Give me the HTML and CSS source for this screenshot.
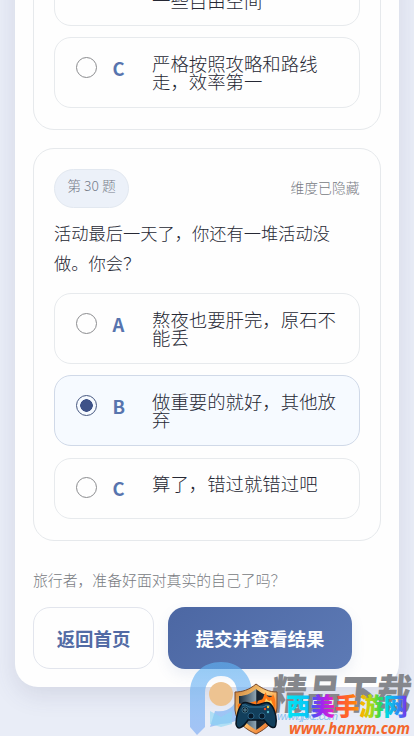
FILE: index.html
```html
<!DOCTYPE html>
<html lang="zh-CN">
<head>
<meta charset="utf-8">
<title>测试</title>
<link rel="stylesheet" href="styles.css">
</head>
<body>
<main class="panel">
  <section class="card">
    <div class="option first"><span class="radio"></span><b class="letter">B</b><span class="answer">大致规划，但留<br>一些自由空间</span></div>
    <div class="option"><span class="radio"></span><b class="letter">C</b><span class="answer">严格按照攻略和路线走，效率第一</span></div>
  </section>
  <section class="card">
    <header class="card-head"><span class="pill">第 30 题</span><span class="hint">维度已隐藏</span></header>
    <p class="question">活动最后一天了，你还有一堆活动没做。你会？</p>
    <div class="option"><span class="radio"></span><b class="letter">A</b><span class="answer">熬夜也要肝完，原石不能丢</span></div>
    <div class="option selected"><span class="radio"></span><b class="letter">B</b><span class="answer">做重要的就好，其他放弃</span></div>
    <div class="option"><span class="radio"></span><b class="letter">C</b><span class="answer">算了，错过就错过吧</span></div>
  </section>
  <p class="note">旅行者，准备好面对真实的自己了吗？</p>
  <div class="actions"><button class="btn">返回首页</button><button class="btn primary">提交并查看结果</button></div>
</main>
<svg class="watermark" width="234" height="86" viewBox="180 650 234 86">
  <defs>
    <linearGradient id="ring" x1="0" y1="0" x2="0" y2="1"><stop offset="0" stop-color="#5fb4f4"/><stop offset="1" stop-color="#79a9f4"/></linearGradient>
    <linearGradient id="rainbow" gradientUnits="userSpaceOnUse" x1="286" y1="0" x2="408" y2="0">
      <stop offset="0" stop-color="#00e8f2"/><stop offset=".17" stop-color="#08c8f5"/><stop offset=".22" stop-color="#4a55f0"/><stop offset=".29" stop-color="#9a28f0"/><stop offset=".38" stop-color="#e020d0"/><stop offset=".42" stop-color="#ff4a48"/><stop offset=".55" stop-color="#ff7a10"/><stop offset=".63" stop-color="#f5b800"/><stop offset=".69" stop-color="#b8d810"/><stop offset=".77" stop-color="#38d850"/><stop offset=".82" stop-color="#00dce0"/><stop offset=".91" stop-color="#1f96f5"/><stop offset="1" stop-color="#8a20e8"/>
    </linearGradient>
    <linearGradient id="gold" x1="0" y1="0" x2="1" y2="1"><stop offset="0" stop-color="#c97a35"/><stop offset=".45" stop-color="#ffd17b"/><stop offset="1" stop-color="#e9550c"/></linearGradient>
    <linearGradient id="steel" x1="0" y1="0" x2="1" y2="0"><stop offset="0" stop-color="#172b3c"/><stop offset=".5" stop-color="#8fa5b3"/><stop offset=".52" stop-color="#14212d"/><stop offset="1" stop-color="#29343c"/></linearGradient>
  </defs>
  <path d="M190 727V693C190 674 203 662 221 662C239 662 252 675 252 693C252 712 239 724 221 724L210 727L215 711C229 713 237 705 237 693C237 682 231 676 221 676C211 676 205 683 205 693V727L197 735Z" fill="url(#ring)" opacity=".62"/>
  <path d="M210 711L221 717L232 711V724L221 727L210 724Z" fill="#8bd6f3" opacity=".6"/>
  <circle cx="221" cy="694" r="12" fill="#edc391"/>
  <text class="mark-gray" transform="translate(270 709) skewX(-6)" textLength="140" lengthAdjust="spacingAndGlyphs">精品下载</text>
  <text class="mark-blue" x="277" y="720" textLength="61">www.jpxz.com</text>
  <path d="M256 684C249 690 242 692 235 692V710C236 723 247 730 256 734C266 729 276 721 277 708V692C269 692 263 689 256 684Z" fill="url(#gold)" stroke="#76482c"/>
  <path d="M256 689C250 694 245 696 239 696V708C240 719 248 725 256 730C264 725 272 718 273 707V696C266 696 261 693 256 689Z" fill="url(#steel)"/>
  <path d="M256 707C258 704 256 701 260 700C264 700 263 695 266 692C266 698 272 699 273 694C276 700 276 705 274 714ZM239 710Q235 702 242 704Q247 701 249 703L256 701L257 706ZM268 718L276 710Q276 722 267 725Z" fill="#ff7815"/>
  <path d="M260 705Q265 704 266 698Q269 703 271 700L274 708Z" fill="#ffd35c"/>
  <path d="M243 703C247 701 250 705 256 705S265 701 269 703C274 706 277 717 276 723C276 730 271 729 264 720H248C243 728 237 731 236 724C236 717 239 706 243 703Z" fill="#123f5c" stroke="#07131f" stroke-width="1.5"/>
  <path d="M242 705Q246 704 249 707H263Q267 704 270 706" fill="none" stroke="#367798"/>
  <circle cx="245" cy="710" r="3" fill="#081b2a" stroke="#4c839b" stroke-width=".7"/><path d="M243 710H247M245 708V712" stroke="#5c8b9e"/>
  <circle cx="251" cy="716" r="3" fill="#07192a" stroke="#367aa1" stroke-width=".7"/><circle cx="262" cy="716" r="3" fill="#07192a" stroke="#367aa1" stroke-width=".7"/>
  <circle cx="265" cy="709" r="1.2" fill="#e94b28"/><circle cx="268" cy="707" r="1.2" fill="#f3cb35"/><circle cx="268" cy="712" r="1.2" fill="#53b7c8"/>
  <text class="mark-rainbow" x="286" y="715" textLength="122" fill="url(#rainbow)">西美手游网</text>
  <text class="mark-orange" x="289" y="734" textLength="121" lengthAdjust="spacingAndGlyphs">www.hanxm.com</text>
</svg>
</body>
</html>
```
FILE: styles.css
```css
* { box-sizing: border-box; }
html, body { height: 736px; overflow: hidden; }
body {
  margin: 0;
  position: relative;
  display: flex;
  flex-direction: column;
  background: #e9edf7;
  font-family: "Noto Sans CJK SC", sans-serif;
  font-weight: 300;
  color: #262834;
}
.panel {
  flex: none;
  margin: -84px 15px 0;
  padding: 18px 18.5px 18px 18px;
  height: 771px;
  background: #fefefe;
  border-radius: 0 0 23px 23px;
  box-shadow: 0 8px 24px rgba(70, 70, 110, .13);
}
.card {
  border: 1px solid #e6e9ec;
  border-radius: 21px;
  padding: 20px;
  margin-bottom: 18.5px;
}
.card:first-child { height: 195.5px; }
.card:nth-child(2) { height: 393px; margin-bottom: 26px; }
.card-head { display: flex; justify-content: space-between; height: 39px; }
.pill {
  width: 75px;
  height: 39px;
  padding-top: 6px;
  text-align: center;
  border: 1px solid #e2e8f0;
  border-radius: 20px;
  background: #ecf1f9;
  color: #777d8a;
  font-size: 13.8px;
  line-height: 19px;
}
.hint { font-size: 13.8px; line-height: 37px; color: #777b83; }
.question { margin: 10px 0 16px; font-size: 17.25px; line-height: 29.5px; }
.option {
  display: flex;
  height: 70.5px;
  padding: 15.5px 20px 16px 21px;
  border: 1px solid #e7eaed;
  border-radius: 17px;
  margin-bottom: 11.75px;
}
.option.first { padding-top: 16.5px; }
.card:nth-child(2) .option:last-child { height: 61.5px; }
.option.selected { background: #f6faff; border-color: #d0d9e8; }
.radio {
  flex: none;
  width: 21px;
  height: 21px;
  margin-top: 3px;
  border: 1.3px solid #8b8c8f;
  border-radius: 50%;
}
.selected .radio {
  border-color: #46577f;
  background: radial-gradient(circle, #3e5288 0 6px, transparent 6.5px);
}
.letter { flex: none; width: 39.5px; margin-left: 15.5px; font-size: 18.4px; line-height: 28px; font-weight: 700; color: #5774ae; }
.answer { flex: 1; font-size: 18.4px; line-height: 18.4px; }
.note { margin: 0; font-size: 14.85px; line-height: 25px; color: #777a81; }
.actions { display: flex; gap: 14px; margin-top: 15px; }
.btn {
  width: 121px;
  height: 62px;
  padding: 0 0 1px;
  border: 1px solid #e2e5ed;
  border-radius: 17px;
  background: #fefefe;
  color: #526ba5;
  font: 700 18.4px "Noto Sans CJK SC", sans-serif;
}
.primary {
  width: 184px;
  border: 0;
  color: #fff;
  background: linear-gradient(135deg, #4c67a3, #5d7ab5);
  box-shadow: 0 6px 14px rgba(76, 103, 163, .1);
}
.watermark { position: absolute; right: 0; bottom: 0; }
.mark-gray { font-size: 41px; font-weight: 900; fill: #85878c; }
.mark-blue { font: italic 11px "Liberation Sans", sans-serif; fill: #8abff0; }
.mark-rainbow { font-size: 24.4px; font-weight: 900; }
.mark-orange { font: italic 700 16px "Open Sans", sans-serif; fill: #f4672c; }
```
